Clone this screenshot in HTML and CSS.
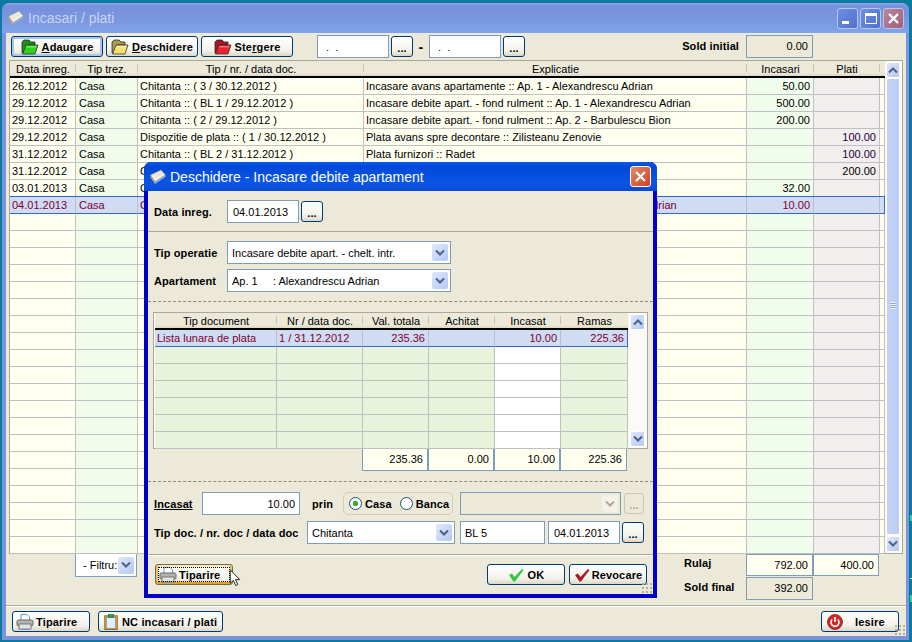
FILE: index.html
```html
<!DOCTYPE html>
<html lang="ro">

<head>
    <meta charset="UTF-8">
    <title>Incasari / plati</title>
    <link rel="stylesheet" href="styles.css">
</head>

<body>
    <svg class="defs" width="0" height="0">
        <symbol id="appicon" viewBox="0 0 16 16">
            <path d="M.5 6 L11 1 L15.500 6 L5 13 Z" fill="#f6f1dc" stroke="#8a8a80" stroke-width=".6"/>
            <path d="M3 6.500 L11 2.500 M5 8 L12.500 4" stroke="#cfd6e6" stroke-width=".8"/>
            <path d="M.5 6 L5 13 L5 15 L.5 8.500 Z" fill="#c9a878"/>
            <path d="M5 13 L15.500 6 L15.500 8 L5 15 Z" fill="#8fa8d8"/>
        </symbol>
        <symbol id="folder" viewBox="0 0 18 16">
            <path d="M3 1 H8 L10 3 H14 V6 H6 L2 14 H1 V3 Z" fill="currentColor" stroke="#333" stroke-width=".8"/>
            <path d="M3 1 H8 L10 3 H14 V6 H6 L2 14 H1 V3 Z" fill="#000" opacity=".3"/>
            <path d="M5 6 H17 L14 15 H1.500 Z" fill="currentColor" stroke="#333" stroke-width=".8"/>
            <path d="M5.500 7 H15.500 L15 8.500 H4.800 Z" fill="#fff" opacity=".35"/>
        </symbol>
        <symbol id="printer" viewBox="0 0 18 16">
            <path d="M5 .5 H11 L13.500 3 V8 H5 Z" fill="#fff" stroke="#6c9ad8"/>
            <rect x="1" y="6" width="16" height="6" rx="1.500" fill="#b4b4b4" stroke="#666"/>
            <rect x="3" y="10" width="12" height="5" fill="#e4e4e4" stroke="#666" stroke-width=".8"/>
            <path d="M5 15.500 H13" stroke="#6c9ad8"/>
        </symbol>
        <symbol id="clipboard" viewBox="0 0 16 18">
            <rect x="1" y="2" width="14" height="15.500" fill="#e8a030" stroke="#8a6018"/>
            <rect x="3" y="4" width="10" height="12" fill="#e4eefa" stroke="#6a8ab8" stroke-width=".7"/>
            <rect x="5" y=".5" width="6" height="3.500" fill="#30a050" stroke="#206838" stroke-width=".7"/>
        </symbol>
        <symbol id="check" viewBox="0 0 16 14">
            <path d="M1 7 L4 5.500 L6.500 9 L14 1 L15.500 2 L7 13.500 L5.500 13.500 Z" fill="currentColor"/>
        </symbol>
        <symbol id="power" viewBox="0 0 16 16">
            <circle cx="8" cy="8" r="7.500" fill="#d02828" stroke="#901818" stroke-width=".8"/>
            <path d="M5.200 5.500 A4 4 0 1 0 10.800 5.500" fill="none" stroke="#fff" stroke-width="1.600"/>
            <path d="M8 3 V8" stroke="#fff" stroke-width="1.600"/>
        </symbol>
        <symbol id="arrowdown" viewBox="0 0 10 8">
            <path d="M1 1.500 L5 5.500 L9 1.500" fill="none" stroke="currentColor" stroke-width="2"/>
        </symbol>
        <symbol id="arrowup" viewBox="0 0 10 8">
            <path d="M1 6.500 L5 2.500 L9 6.500" fill="none" stroke="currentColor" stroke-width="2"/>
        </symbol>
    </svg>

    <span class="desk-mark m1"></span>
    <span class="desk-mark m2"></span>
    <span class="desk-mark m3"></span>

    <div class="window">
        <div class="titlebar">
            <svg class="title-icon"><use href="#appicon"/></svg>
            <span class="title-text">Incasari / plati</span>
            <span class="caption-btn"><i class="cap-min"></i></span>
            <span class="caption-btn"><i class="cap-max"></i></span>
            <span class="caption-btn close"><svg width="13" height="13" viewBox="0 0 13 13"><path d="M2 2 L11 11 M11 2 L2 11" stroke="#fff" stroke-width="2.400"/></svg></span>
        </div>

        <div class="window-body">
            <div class="toolbar">
                <button class="btn tool focus"><svg class="icon folder green"><use href="#folder"/></svg><span><u>A</u>daugare</span></button>
                <button class="btn tool"><svg class="icon folder yellow"><use href="#folder"/></svg><span><u>D</u>eschidere</span></button>
                <button class="btn tool"><svg class="icon folder red"><use href="#folder"/></svg><span>Ste<u>r</u>gere</span></button>
                <input class="field date first" value=" .  .">
                <button class="btn dots">...</button>
                <b class="dash">-</b>
                <input class="field date" value=" .  .">
                <button class="btn dots">...</button>
                <b class="sold-label">Sold initial</b>
                <div class="field readonly num sold-box">0.00</div>
            </div>

            <div class="gridbox main-grid">
                <table class="grid">
                    <colgroup>
                        <col class="c-date"><col class="c-trez"><col class="c-doc"><col class="c-expl"><col class="c-inc"><col class="c-pla"><col class="c-end">
                    </colgroup>
                    <thead>
                        <tr><th>Data inreg.</th><th>Tip trez.</th><th>Tip / nr. / data doc.</th><th>Explicatie</th><th>Incasari</th><th>Plati</th><th></th></tr>
                    </thead>
                    <tbody>
                        <tr><td>26.12.2012</td><td class="pad">Casa</td><td>Chitanta :: ( 3 / 30.12.2012 )</td><td>Incasare avans apartamente :: Ap. 1 - Alexandrescu Adrian</td><td class="num">50.00</td><td></td><td></td></tr>
                        <tr><td>29.12.2012</td><td class="pad">Casa</td><td>Chitanta :: ( BL 1 / 29.12.2012 )</td><td>Incasare debite apart. - fond rulment :: Ap. 1 - Alexandrescu Adrian</td><td class="num">500.00</td><td></td><td></td></tr>
                        <tr><td>29.12.2012</td><td class="pad">Casa</td><td>Chitanta :: ( 2 / 29.12.2012 )</td><td>Incasare debite apart. - fond rulment :: Ap. 2 - Barbulescu Bion</td><td class="num">200.00</td><td></td><td></td></tr>
                        <tr><td>29.12.2012</td><td class="pad">Casa</td><td>Dispozitie de plata :: ( 1 / 30.12.2012 )</td><td>Plata avans spre decontare :: Zilisteanu Zenovie</td><td></td><td class="num plata">100.00</td><td></td></tr>
                        <tr><td>31.12.2012</td><td class="pad">Casa</td><td>Chitanta :: ( BL 2 / 31.12.2012 )</td><td>Plata furnizori :: Radet</td><td></td><td class="num plata">100.00</td><td></td></tr>
                        <tr><td>31.12.2012</td><td class="pad">Casa</td><td>Chitanta</td><td></td><td></td><td class="num">200.00</td><td></td></tr>
                        <tr><td>03.01.2013</td><td class="pad">Casa</td><td>Chitanta</td><td></td><td class="num">32.00</td><td></td><td></td></tr>
                        <tr class="selected"><td>04.01.2013</td><td class="pad">Casa</td><td>Chitanta</td><td class="right-text">Incasare debite apart. - chelt. intr. :: Ap. 1 - Alexandrescu Adrian</td><td class="num">10.00</td><td></td><td></td></tr>
                        <tr><td></td><td></td><td></td><td></td><td></td><td></td><td></td></tr>
                        <tr><td></td><td></td><td></td><td></td><td></td><td></td><td></td></tr>
                        <tr><td></td><td></td><td></td><td></td><td></td><td></td><td></td></tr>
                        <tr><td></td><td></td><td></td><td></td><td></td><td></td><td></td></tr>
                        <tr><td></td><td></td><td></td><td></td><td></td><td></td><td></td></tr>
                        <tr><td></td><td></td><td></td><td></td><td></td><td></td><td></td></tr>
                        <tr><td></td><td></td><td></td><td></td><td></td><td></td><td></td></tr>
                        <tr><td></td><td></td><td></td><td></td><td></td><td></td><td></td></tr>
                        <tr><td></td><td></td><td></td><td></td><td></td><td></td><td></td></tr>
                        <tr><td></td><td></td><td></td><td></td><td></td><td></td><td></td></tr>
                        <tr><td></td><td></td><td></td><td></td><td></td><td></td><td></td></tr>
                        <tr><td></td><td></td><td></td><td></td><td></td><td></td><td></td></tr>
                        <tr><td></td><td></td><td></td><td></td><td></td><td></td><td></td></tr>
                        <tr><td></td><td></td><td></td><td></td><td></td><td></td><td></td></tr>
                        <tr><td></td><td></td><td></td><td></td><td></td><td></td><td></td></tr>
                        <tr><td></td><td></td><td></td><td></td><td></td><td></td><td></td></tr>
                        <tr><td></td><td></td><td></td><td></td><td></td><td></td><td></td></tr>
                        <tr><td></td><td></td><td></td><td></td><td></td><td></td><td></td></tr>
                        <tr><td></td><td></td><td></td><td></td><td></td><td></td><td></td></tr>
                        <tr><td></td><td></td><td></td><td></td><td></td><td></td><td></td></tr>
                    </tbody>
                </table>
                <div class="scrollbar">
                    <span class="scroll-btn"><svg width="10" height="8"><use href="#arrowup"/></svg></span>
                    <span class="scroll-thumb"><i class="thumb-grip"></i></span>
                    <span class="scroll-btn"><svg width="10" height="8"><use href="#arrowdown"/></svg></span>
                </div>
            </div>

            <div class="summary">
                <div class="filter">- Filtru:<span class="arrow"><svg width="10" height="8"><use href="#arrowdown"/></svg></span></div>
                <b class="sum-label">Rulaj</b>
                <div class="field num total">792.00</div>
                <div class="field num total">400.00</div>
                <b class="sum-label final">Sold final</b>
                <div class="field readonly num">392.00</div>
            </div>

            <div class="footer">
                <button class="btn foot w78"><svg class="icon"><use href="#printer"/></svg><span>Tiparire</span></button>
                <button class="btn foot w125"><svg class="icon"><use href="#clipboard"/></svg><span>NC incasari / plati</span></button>
                <button class="btn foot w78 exit"><svg class="icon"><use href="#power"/></svg><span>Iesire</span></button>
            </div>
            <div class="grip"></div>
        </div>
    </div>

    <div class="dialog">
        <div class="dialog-title">
            <svg class="title-icon"><use href="#appicon"/></svg>
            <span class="dialog-text">Deschidere - Incasare debite apartament</span>
            <span class="caption-btn dlg-close"><svg width="13" height="13" viewBox="0 0 13 13"><path d="M2 2 L11 11 M11 2 L2 11" stroke="#fff" stroke-width="2.400"/></svg></span>
        </div>

        <div class="dialog-body">
            <div class="sec sec-date">
                <b class="lbl">Data inreg.</b>
                <input class="field date" value="04.01.2013">
                <button class="btn dots">...</button>
            </div>

            <div class="sec sec-op">
                <div class="row">
                    <b class="lbl">Tip operatie</b>
                    <div class="select w224">Incasare debite apart. - chelt. intr.<span class="arrow"><svg width="10" height="8"><use href="#arrowdown"/></svg></span></div>
                </div>
                <div class="row">
                    <b class="lbl">Apartament</b>
                    <div class="select w224">Ap. 1 &nbsp;&nbsp;&nbsp; : Alexandrescu Adrian<span class="arrow"><svg width="10" height="8"><use href="#arrowdown"/></svg></span></div>
                </div>
            </div>

            <div class="sec sec-table">
                <div class="gridbox doc-grid">
                    <table class="grid docs">
                        <colgroup>
                            <col class="d-tip"><col class="d-nr"><col class="d-val"><col class="d-val"><col class="d-inc"><col class="d-ram">
                        </colgroup>
                        <thead>
                            <tr><th>Tip document</th><th>Nr / data doc.</th><th>Val. totala</th><th>Achitat</th><th>Incasat</th><th>Ramas</th></tr>
                        </thead>
                        <tbody>
                            <tr class="selected"><td>Lista lunara de plata</td><td>1 / 31.12.2012</td><td class="num">235.36</td><td></td><td class="num">10.00</td><td class="num">225.36</td></tr>
                            <tr><td></td><td></td><td></td><td></td><td></td><td></td></tr>
                            <tr><td></td><td></td><td></td><td></td><td></td><td></td></tr>
                            <tr><td></td><td></td><td></td><td></td><td></td><td></td></tr>
                            <tr><td></td><td></td><td></td><td></td><td></td><td></td></tr>
                            <tr><td></td><td></td><td></td><td></td><td></td><td></td></tr>
                            <tr><td></td><td></td><td></td><td></td><td></td><td></td></tr>
                        </tbody>
                    </table>
                    <div class="scrollbar">
                        <span class="scroll-btn"><svg width="10" height="8"><use href="#arrowup"/></svg></span>
                        <span class="scroll-track"></span>
                        <span class="scroll-btn"><svg width="10" height="8"><use href="#arrowdown"/></svg></span>
                    </div>
                </div>
                <div class="totals">
                    <div class="field num total">235.36</div>
                    <div class="field num total">0.00</div>
                    <div class="field num total">10.00</div>
                    <div class="field num total wide">225.36</div>
                </div>
            </div>

            <div class="sec sec-pay">
                <div class="row">
                    <b class="lbl-inc"><u>Incasat</u></b>
                    <input class="field num inc-input" value="10.00">
                    <b class="prin">prin</b>
                    <div class="radio-group">
                        <span class="radio on"></span><b>Casa</b>
                        <span class="radio"></span><b>Banca</b>
                    </div>
                    <div class="select off">
                        <span class="arrow"><svg width="10" height="8"><use href="#arrowdown"/></svg></span>
                    </div>
                    <button class="btn dots off">...</button>
                </div>
                <div class="row">
                    <b class="lbl-doc">Tip doc. / nr. doc / data doc</b>
                    <div class="select w148">Chitanta<span class="arrow"><svg width="10" height="8"><use href="#arrowdown"/></svg></span></div>
                    <input class="field nrdoc" value="BL 5">
                    <input class="field date" value="04.01.2013">
                    <button class="btn dots">...</button>
                </div>
            </div>

            <div class="sec sec-actions">
                <button class="btn hot w78"><svg class="icon"><use href="#printer"/></svg><span>Tiparire</span></button>
                <button class="btn action ok"><svg class="icon check-ok"><use href="#check"/></svg><span>OK</span></button>
                <button class="btn action revoke"><svg class="icon check-no"><use href="#check"/></svg><span>Revocare</span></button>
            </div>
            <div class="grip"></div>
        </div>

        <svg class="cursor" width="14" height="18" viewBox="0 0 12 19"><path d="M1 1 V15 L4.300 12 L6.800 17.500 L9 16.500 L6.500 11.200 H11 Z" fill="#fff" stroke="#222" stroke-width="1"/></svg>
    </div>
</body>

</html>
```

FILE: styles.css
```css
* {
    box-sizing: border-box;
}

body {
    margin: 0;
    width: 912px;
    height: 642px;
    overflow: hidden;
    position: relative;
    background: #0a7b9e;
    font-family: "Liberation Sans", Arial, sans-serif;
    font-size: 11px;
    color: #000;
}

.defs {
    position: absolute;
}

b {
    font-weight: bold;
    letter-spacing: .1px;
}

/* bits of the desktop showing right of the window */
.desk-mark {
    position: absolute;
    left: 910px;
    width: 2px;
    background: #20e090;
}

.m1 {
    top: 515px;
    height: 6px;
}

.m2 {
    top: 578px;
    height: 1px;
    background: #e8f4f8;
}

.m3 {
    top: 595px;
    height: 7px;
}

/* main window */
.window {
    margin: 3px 0 0 2px;
    width: 907px;
    height: 637px;
    display: flex;
    flex-direction: column;
    border-radius: 7px 7px 0 0;
    background: #7b93db;
}

.titlebar {
    height: 30px;
    flex: none;
    display: flex;
    align-items: center;
    padding: 0 5px 0 6px;
    border-radius: 7px 7px 0 0;
    background: linear-gradient(#8ea4e4 0, #7790dc 12%, #7b98e0 60%, #7fa4ea 100%);
}

.title-icon {
    width: 16px;
    height: 16px;
    flex: none;
}

.title-text {
    margin-left: 4px;
    flex: 1;
    font-size: 14px;
    color: #c9d4f2;
}

.caption-btn {
    width: 21px;
    height: 21px;
    margin-left: 2px;
    display: flex;
    align-items: center;
    justify-content: center;
    position: relative;
    border: 1px solid #b8c6ee;
    border-radius: 3px;
    background: linear-gradient(135deg, #6f8fe0, #4f70d0);
}

.caption-btn.close {
    background: linear-gradient(135deg, #b8889c, #a06078);
}

.cap-min {
    width: 7px;
    height: 3px;
    background: #fff;
    margin-top: 8px;
    margin-right: 4px;
}

.cap-max {
    width: 12px;
    height: 11px;
    border: 1px solid #fff;
    border-top-width: 3px;
}

.window-body {
    flex: 1;
    margin: 0 3px 4px 4px;
    position: relative;
    background: #ece9d8;
    display: flex;
    flex-direction: column;
}

/* buttons and fields */
.btn {
    font: inherit;
    font-weight: bold;
    letter-spacing: .15px;
    height: 21px;
    padding: 0;
    display: flex;
    align-items: center;
    justify-content: center;
    color: #000;
    border: 1px solid #003c74;
    border-radius: 3px;
    background: linear-gradient(#ffffff, #f3f2ea 70%, #dcd8c8);
}

.dots {
    width: 22px;
    flex: none;
    padding-top: 3px;
}

.dots.off {
    width: 20px;
    margin-left: 3px;
    color: #aca899;
    border-color: #c9c7ba;
    background: #ece9d8;
}

.field {
    font: inherit;
    height: 23px;
    padding: 0 4px;
    line-height: 21px;
    color: #000;
    border: 1px solid #7f9db9;
    border-radius: 0;
    background: #fff;
    outline: none;
}

.field.readonly {
    background: #ece9d8;
}

.num {
    text-align: right;
}

.date {
    width: 72px;
    flex: none;
    padding-left: 5px;
}

.select {
    height: 23px;
    padding-left: 4px;
    display: flex;
    align-items: center;
    justify-content: space-between;
    border: 1px solid #7f9db9;
    background: #fff;
}

.select.off {
    width: 161px;
    margin-left: 7px;
    background: #ece9d8;
    justify-content: flex-end;
}

.select.off .arrow {
    color: #aca899;
    background: #f4f2e8;
    border-color: #fff;
}

.w224 {
    width: 224px;
}

.w148 {
    width: 148px;
}

.arrow {
    width: 16px;
    height: 17px;
    margin-right: 2px;
    display: flex;
    align-items: center;
    justify-content: center;
    color: #4d6185;
    border-radius: 2px;
    background: linear-gradient(135deg, #dfe8fb, #b4c8f6);
}

.icon {
    width: 18px;
    height: 16px;
    flex: none;
}

/* toolbar */
.toolbar {
    height: 27px;
    flex: none;
    display: flex;
    align-items: center;
    padding-left: 5px;
    gap: 2px;
}

.tool {
    width: 92px;
    margin-right: 1px;
    gap: 3px;
}

.tool.focus {
    box-shadow: inset 0 0 0 2px #a9c4ee;
}

.folder.green {
    color: #30d020;
}

.folder.yellow {
    color: #f6e070;
}

.folder.red {
    color: #f02030;
}

.first {
    margin-left: 21px;
}

.dash {
    width: 12px;
    text-align: center;
    font-size: 14px;
}

.sold-label {
    width: 212px;
    text-align: right;
    margin-right: 5px;
    margin-bottom: 2px;
}

.sold-box {
    width: 67px;
}

/* grids */
.gridbox {
    display: flex;
    background: #fff;
    border: 1px solid #aca899;
    box-shadow: inset 0 0 0 1px #fff;
}

.main-grid {
    height: 494px;
    width: 894px;
    margin-left: 3px;
    padding: 0;
    flex: none;
}

.grid {
    table-layout: fixed;
    border-collapse: separate;
    border-spacing: 0;
    width: 875px;
    flex: none;
    align-self: flex-start;
    background: #fffff0;
}

.grid th {
    height: 17px;
    padding: 0;
    font-weight: normal;
    background: linear-gradient(#ece9d8, #ece9d8 80%, #dcd8c8);
    border-bottom: 2px solid #000;
    position: relative;
}

.grid th + th::before {
    content: "";
    position: absolute;
    left: -1px;
    top: 3px;
    bottom: 4px;
    width: 1px;
    background: #c8c5b2;
}

.grid td {
    height: 17px;
    padding: 0 3px 0 2px;
    white-space: nowrap;
    overflow: hidden;
    line-height: 16px;
    border-right: 1px solid #c0c0c0;
    border-bottom: 1px solid #c0c0c0;
}

.grid td.pad {
    padding-left: 3px;
}

.grid td.plata {
    color: #200040;
}

.grid .num {
    text-align: right;
}

.grid td.right-text {
    padding-left: 2px;
}

.c-date {
    width: 66px;
}

.c-trez {
    width: 62px;
    background: #f0fbea;
}

.c-doc {
    width: 226px;
}

.c-expl {
    width: 383px;
}

.c-inc {
    width: 67px;
    background: #f0fdec;
}

.c-pla {
    width: 66px;
    background: #f2eeee;
}

.c-end {
    width: 5px;
}

.grid tr.selected td {
    color: #800030;
    background: #cfdcf3;
    border-right-color: #b8c0cc;
    border-bottom-color: #3568c0;
}

.grid tr.selected td:last-child {
    border-right-color: #3568c0;
}

.main-grid tr.selected td {
    box-shadow: 0 -1px 0 #3568c0;
}

.scrollbar {
    width: 17px;
    padding: 1px 2px 1px 1px;
    display: flex;
    flex-direction: column;
    background: #fbfaf4;
}

.scroll-btn {
    height: 16px;
    flex: none;
    display: flex;
    align-items: center;
    justify-content: center;
    color: #4d6185;
    border: 1px solid #fff;
    border-radius: 2px;
    background: linear-gradient(135deg, #dfe8fb, #b4c8f6);
}

.scroll-thumb {
    flex: 1;
    margin-bottom: 1px;
    display: flex;
    align-items: center;
    justify-content: center;
    border: 1px solid #fff;
    border-radius: 2px;
    background: linear-gradient(90deg, #c5d4f8, #b9caf5);
}

.thumb-grip {
    width: 6px;
    height: 7px;
    margin-bottom: 2px;
    background: repeating-linear-gradient(#eef3fe 0 1px, #8ea6dc 1px 2px);
}

.scroll-track {
    flex: 1;
    background: #fbfaf4;
}

/* under the grid */
.summary {
    height: 51px;
    flex: none;
    display: grid;
    grid-template-columns: 69px 62px 547px 62px 67px 66px;
    grid-template-rows: 23px 23px;
}

.filter {
    grid-column: 2;
    padding-left: 7px;
    display: flex;
    align-items: center;
    justify-content: space-between;
    border: 1px solid #7f9db9;
    border-top: none;
    background: #fff;
}

.filter .arrow {
    margin-right: 2px;
    height: 17px;
}

.sum-label {
    grid-column: 4;
    padding-top: 3px;
}

.sum-label.final {
    padding-top: 4px;
}

.total {
    background: #fffff0;
    height: 22px;
}

.summary .readonly {
    grid-column: 5;
}

.footer {
    height: 31px;
    flex: none;
    display: flex;
    align-items: center;
    gap: 8px;
    padding: 1px 7px 0 6px;
    border-top: 1px solid #aca899;
    box-shadow: inset 0 1px 0 #fff;
}

.foot {
    gap: 2px;
    justify-content: flex-start;
    padding-left: 3px;
}

.w78 {
    width: 78px;
}

.w125 {
    width: 125px;
}

.exit {
    margin-left: auto;
    gap: 11px;
    padding-left: 4px;
}

.grip {
    position: absolute;
    right: 1px;
    bottom: 1px;
    width: 10px;
    height: 10px;
    background: radial-gradient(circle at 1px 1px, #b5b19c 1px, transparent 1.200px) 0 0 / 4px 4px;
}

/* dialog */
.dialog {
    position: absolute;
    left: 144px;
    top: 162px;
    width: 513px;
    height: 436px;
    display: flex;
    flex-direction: column;
    border-radius: 7px 7px 0 0;
    background: #0000c8;
}

.dialog-title {
    height: 29px;
    flex: none;
    display: flex;
    align-items: center;
    padding: 0 6px 0 6px;
    border-radius: 7px 7px 0 0;
    background: linear-gradient(#0a5ee8 0, #0047d8 15%, #0a56e6 70%, #0a4ad8 100%);
}

.dialog-text {
    margin-left: 4px;
    flex: 1;
    font-size: 14px;
    color: #fff;
}

.dlg-close {
    border-color: #fff;
    background: linear-gradient(135deg, #e88868, #d04020);
}

.dialog-body {
    flex: 1;
    margin: 0 4px 4px 4px;
    position: relative;
    background: #ece9d8;
    display: flex;
    flex-direction: column;
}

.sec {
    flex: none;
    padding-left: 6px;
    border-bottom: 1px solid #aca899;
}

.sec-date {
    height: 41px;
    display: flex;
    align-items: center;
    gap: 2px;
    padding-top: 1px;
}

.lbl {
    width: 71px;
    flex: none;
}

.sec-op {
    height: 70px;
    padding-top: 9px;
    display: flex;
    flex-direction: column;
    gap: 5px;
    border-bottom: 1px dashed #8a8a80;
}

.sec-op .lbl {
    width: 73px;
}

.row {
    display: flex;
    align-items: center;
}

.sec-table {
    height: 180px;
    padding: 10px 0 0 5px;
    border-bottom: 1px dashed #8a8a80;
}

.doc-grid {
    width: 495px;
    height: 137px;
    padding: 0 0 0 1px;
}

.docs {
    width: 473px;
    background: #e8f3dc;
}

.d-tip {
    width: 122px;
}

.d-nr {
    width: 86px;
}

.d-val {
    width: 66px;
}

.d-inc {
    width: 66px;
    background: #fff;
}

.d-ram {
    width: 67px;
}

.doc-grid .scrollbar {
    width: 19px;
    padding-left: 2px;
}

.totals {
    display: flex;
    margin-left: 209px;
}

.totals .total {
    width: 66px;
    border-top: none;
}

.totals .wide {
    width: 67px;
}

.sec-pay {
    height: 73px;
    padding-top: 10px;
    display: flex;
    flex-direction: column;
    gap: 6px;
}

.lbl-inc {
    width: 48px;
}

.inc-input {
    width: 98px;
}

.prin {
    margin-left: 12px;
    width: 31px;
}

.radio-group {
    width: 110px;
    height: 23px;
    display: flex;
    align-items: center;
    padding-left: 5px;
    gap: 3px;
    border: 1px solid #d0cdb8;
    border-radius: 5px;
}

.radio {
    width: 13px;
    height: 13px;
    border: 1px solid #1c5180;
    border-radius: 50%;
    background: #fff;
}

.radio + b + .radio {
    margin-left: 5px;
}

.radio.on {
    background: radial-gradient(circle, #30b030 2.500px, #fff 3px);
}

.lbl-doc {
    width: 153px;
}

.nrdoc {
    width: 85px;
    margin: 0 3px 0 5px;
}

.sec-pay .date {
    margin-right: 2px;
}

.sec-actions {
    flex: 1;
    padding: 9px 6px 0 7px;
    border: none;
    display: flex;
    align-items: flex-start;
    box-shadow: inset 0 1px 0 #fff;
}

.hot {
    gap: 2px;
    justify-content: flex-start;
    padding-left: 3px;
    position: relative;
    border-color: #6a6a60;
    box-shadow: inset 0 -2px 0 #e8a020, inset 2px 0 0 #f0c060, inset -2px 0 0 #f0c060, inset 0 2px 0 #fce8b0;
}

.hot::after {
    content: "";
    position: absolute;
    inset: 2px;
    border: 1px dotted #000;
}

.action {
    width: 78px;
    gap: 4px;
}

.ok {
    margin-left: auto;
    margin-right: 4px;
}

.check-ok {
    width: 16px;
    height: 14px;
    color: #30c840;
}

.check-no {
    width: 16px;
    height: 14px;
    color: #a81828;
}

.revoke {
    gap: 2px;
}

.cursor {
    position: absolute;
    left: 84px;
    top: 407px;
}
```
